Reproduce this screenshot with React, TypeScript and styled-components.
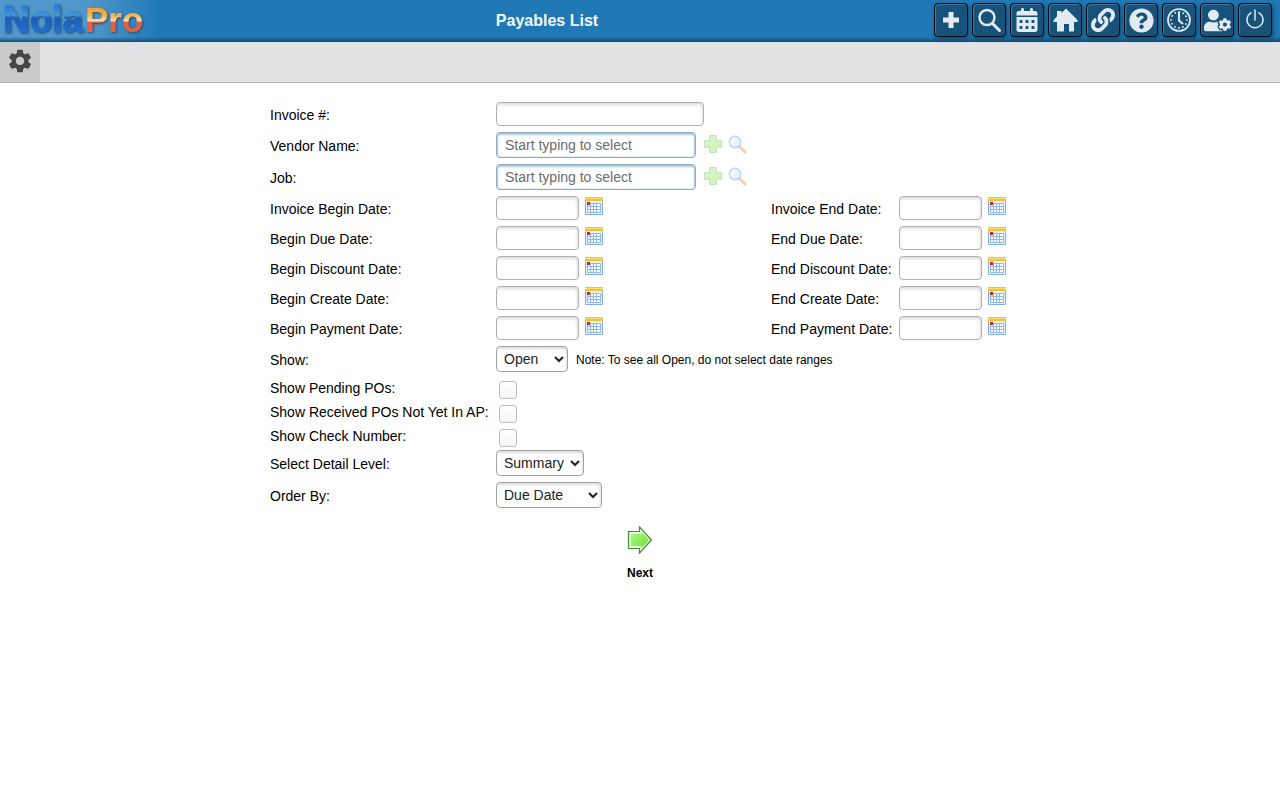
import React, { useId } from "react";
import styled, { createGlobalStyle } from "styled-components";
import { FaLink, FaUserCog, FaQuestionCircle } from "react-icons/fa";
import { FaCalendarDays } from "react-icons/fa6";
import { MdSettings } from "react-icons/md";

const Global = createGlobalStyle`
  * { box-sizing: border-box; }
  body { margin: 0; background: #fff; color: #000; font: 14px/16px "Liberation Sans", Arial, sans-serif; }
  button, input, select { font: inherit; color: inherit; }
`;

const Header = styled.header`
  display: flex;
  align-items: center;
  height: 42px;
  padding-right: 8px;
  background: linear-gradient(to bottom, transparent 37px, #104c75 42px),
    linear-gradient(to right, #5097cb 0, #4f97ca 90px, #2079b4 160px, #2079b4 100%);
`;

const Logo = styled.a`
  flex: none;
  width: 160px;
  height: 42px;
  svg { display: block; }
`;

const Title = styled.h1`
  flex: 1;
  margin: 0;
  text-align: center;
  color: #f4f8fb;
  font-size: 16px;
  line-height: 20px;
`;

const Tools = styled.nav`
  display: flex;
  gap: 4px;
  padding-bottom: 2px;
`;

const ToolButton = styled.button`
  display: grid;
  place-items: center;
  width: 34px;
  height: 34px;
  padding: 0;
  color: #e2ebf2;
  background: #17527b;
  border: 1px solid #020a14;
  border-radius: 4px;
  box-shadow: inset 1px 1px 1px #447aa0, 1px 2px 4px #10456a;
  svg { display: block; }
`;

const SubBar = styled.div`
  display: flex;
  height: 41px;
  background: #e1e2e4;
  border-bottom: 1px solid #b0b0b1;
`;

const GearButton = styled.button`
  display: grid;
  place-items: center;
  width: 40px;
  height: 40px;
  padding: 0 0 2px;
  border: 0;
  color: #444648;
  background: #c9cacc;
`;

const Form = styled.form`
  max-width: 740px;
  margin: 16px auto 0;
`;

const Row = styled.div<{ $height: number }>`
  display: grid;
  grid-template-columns: 226px 275px 128px 1fr;
  align-items: center;
  min-height: ${(p) => p.$height}px;
`;

const Label = styled.label`
  padding-top: 2px;
  white-space: nowrap;
`;

const Field = styled.div`
  display: flex;
  align-items: center;
  white-space: nowrap;
`;

const TextInput = styled.input<{ $width: number }>`
  width: ${(p) => p.$width}px;
  height: 24px;
  padding: 0 8px;
  background: #fff;
  border: 1px solid #b0b0b0;
  border-radius: 4px;
  box-shadow: inset -1px 2px 3px #ddd;
`;

const LookupInput = styled(TextInput)`
  height: 26px;
  border-color: #8eabc0;
  box-shadow: inset 0 1px 2px 1px #a5c8e0;
  margin-right: 8px;
  &::placeholder { color: #6c6c6c; opacity: 1; }
`;

const IconButton = styled.button<{ $faded?: boolean }>`
  display: block;
  padding: 0;
  border: 0;
  background: none;
  opacity: ${(p) => (p.$faded ? 0.4 : 1)};
  svg { display: block; }
`;

const LookupIcons = styled.div`
  display: flex;
  gap: 6px;
  padding-bottom: 2px;
`;

const DateIcon = styled(IconButton)`
  margin-left: 6px;
  padding-bottom: 4px;
`;

const Select = styled.select<{ $width: number }>`
  flex: none;
  width: ${(p) => p.$width}px;
  height: 26px;
  padding: 0 0 0 3px;
  background: #fff;
  border: 1px solid #a4a4a4;
  border-radius: 4px;
  box-shadow: inset -1px 2px 3px #ddd;
  color: #222;
`;

const Note = styled.span`
  margin-left: 8px;
  padding-top: 2px;
  font-size: 12px;
`;

const CheckCell = styled.div`
  align-self: end;
  padding-left: 3px;
`;

const Checkbox = styled.input`
  display: block;
  appearance: none;
  width: 18px;
  height: 18px;
  margin: 0;
  border: 1px solid #bbb;
  border-radius: 3px;
  background: linear-gradient(#fff, #f7f7f7);
  &:checked { background: #2079b4; }
`;

const NextButton = styled.button`
  display: flex;
  flex-direction: column;
  align-items: center;
  gap: 11px;
  margin: 15px auto 0;
  padding: 0;
  border: 0;
  background: none;
  font-size: 12px;
  font-weight: bold;
`;

const LogoArt = () => (
  <svg width="150" height="42" viewBox="0 0 150 42" role="img" aria-label="NolaPro">
    <defs>
      <linearGradient id="blue" gradientUnits="userSpaceOnUse" x1="0" y1="4" x2="0" y2="32">
        <stop offset="0" stopColor="#1f74cc" />
        <stop offset="0.4" stopColor="#4596dc" />
        <stop offset="0.5" stopColor="#1b5cb9" />
        <stop offset="1" stopColor="#2470cb" />
      </linearGradient>
      <linearGradient id="orange" gradientUnits="userSpaceOnUse" x1="0" y1="4" x2="0" y2="32">
        <stop offset="0" stopColor="#f5951a" />
        <stop offset="0.4" stopColor="#f9b04a" />
        <stop offset="0.6" stopColor="#fbdcae" />
        <stop offset="0.66" stopColor="#e75c3a" />
        <stop offset="1" stopColor="#e56443" />
      </linearGradient>
      <filter id="raise" x="-10%" y="-10%" width="120%" height="130%">
        <feDropShadow dx="1" dy="1" stdDeviation="0.8" floodColor="#1b3f60" floodOpacity="0.9" />
      </filter>
    </defs>
    <g filter="url(#raise)" fontFamily="Liberation Sans, Arial, sans-serif" fontWeight="700">
      <text x="3" y="32" fontSize="37" fill="url(#blue)" stroke="url(#blue)" strokeWidth="0.8">Nola</text>
      <text x="85" y="32" fontSize="35" fill="url(#orange)">Pro</text>
    </g>
  </svg>
);

const PlusGlyph = () => (
  <svg width="26" height="26" viewBox="0 0 26 26" fill="currentColor">
    <path d="M10.500 5h5v5.500H21v5h-5.500V21h-5v-5.500H5v-5h5.500z" />
  </svg>
);

const SearchGlyph = () => (
  <svg width="26" height="26" viewBox="0 0 26 26" fill="none" stroke="currentColor">
    <circle cx="11" cy="10.500" r="7.500" strokeWidth="2.400" />
    <path d="M16.500 16.500L23.500 23.500" strokeWidth="3" strokeLinecap="round" />
  </svg>
);

const HouseGlyph = () => (
  <svg width="26" height="26" viewBox="0 0 26 26" fill="currentColor">
    <path d="M14 1.500L25.500 13v2H22v9.500h-5V17h-5v7.500H5V15H1.500v-2L5 9.500V4h4.500v2z" />
  </svg>
);

const ClockGlyph = () => (
  <svg width="26" height="26" viewBox="0 0 26 26" fill="none" stroke="currentColor">
    <circle cx="13" cy="13" r="11" strokeWidth="1.700" />
    <circle cx="13" cy="13" r="8" strokeWidth="1.800" strokeDasharray="1.600 2.589" strokeDashoffset="0.800" />
    <path d="M13 5v8.500l4 3.500" strokeWidth="2" />
  </svg>
);

const PowerGlyph = () => (
  <svg width="24" height="24" viewBox="0 0 24 24" fill="none" stroke="currentColor" strokeWidth="1.500" strokeLinecap="round">
    <path d="M12 2v10M8 4.800a8 8 0 1 0 8 0" />
  </svg>
);

const PlusArt = () => (
  <svg width="18" height="18" viewBox="0 0 18 18">
    <path d="M5.500 .5h7v5h5v7h-5v5h-7v-5h-5v-7h5z" fill="#8fe05a" stroke="#6fbf55" />
    <path d="M7 2h4v5h5v2H2V7h5z" fill="#9ee86c" />
  </svg>
);

const LensArt = () => (
  <svg width="19" height="19" viewBox="0 0 19 19" fill="none">
    <path d="M11.500 11.500l5.500 5.500" stroke="#e89036" strokeWidth="3" strokeLinecap="round" />
    <circle cx="7" cy="7" r="5.800" fill="#cfeafa" stroke="#5d9fd8" strokeWidth="1.500" />
    <path d="M4 6.500a3 3 0 0 1 3-2.500" stroke="#fff" strokeWidth="1.500" />
  </svg>
);

const CalendarArt = () => (
  <svg width="18" height="18" viewBox="0 0 18 18">
    <path d="M.5.500h17v17H.5z" fill="#e6f1fc" stroke="#86ade0" />
    <path d="M0 0h18v4H0z" fill="#ecc438" />
    <path d="M0 1h18v1H0z" fill="#f9df78" />
    <path d="M3 6h12v9H3z" fill="#fff" />
    <path d="M2.500 6.500h13v9h-13zM2.500 9.500h13M2.500 12.500h13M5.500 6v9M8.500 6v9M11.500 6v9" fill="none" stroke="#90b9ea" />
    <path d="M2 5h3v3H2z" fill="#c62b2b" />
  </svg>
);

const NextArt = () => (
  <svg width="26" height="28" viewBox="0 0 26 28">
    <defs>
      <linearGradient id="go" x1="0" y1="0" x2="1" y2="1">
        <stop offset="0" stopColor="#b4f580" />
        <stop offset="1" stopColor="#6ae03c" />
      </linearGradient>
    </defs>
    <path d="M1.500 5.500h11V.8L24.500 14 12.500 27.200v-4.700h-11z" fill="#e8fbd9" stroke="#3f8f34" strokeWidth="1.200" />
    <path d="M4 8h10.500V5.500L22 14l-7.500 8.500V20H4z" fill="url(#go)" />
  </svg>
);

const tools = [
  { name: "Add", icon: <PlusGlyph /> },
  { name: "Search", icon: <SearchGlyph /> },
  { name: "Calendar", icon: <FaCalendarDays size={24} /> },
  { name: "Home", icon: <HouseGlyph /> },
  { name: "Links", icon: <FaLink size={24} /> },
  { name: "Help", icon: <FaQuestionCircle size={25} /> },
  { name: "Time clock", icon: <ClockGlyph /> },
  { name: "User settings", icon: <FaUserCog size={27} /> },
  { name: "Log out", icon: <PowerGlyph /> },
];

const dates = [
  ["Invoice Begin Date:", "Invoice End Date:"],
  ["Begin Due Date:", "End Due Date:"],
  ["Begin Discount Date:", "End Discount Date:"],
  ["Begin Create Date:", "End Create Date:"],
  ["Begin Payment Date:", "End Payment Date:"],
];

function LookupRow({ label }: { label: string }) {
  const id = useId();
  return (
    <Row $height={32}>
      <Label htmlFor={id}>{label}</Label>
      <Field>
        <LookupInput id={id} $width={200} placeholder="Start typing to select" />
        <LookupIcons>
          <IconButton type="button" $faded aria-label="Add"><PlusArt /></IconButton>
          <IconButton type="button" $faded aria-label="Search"><LensArt /></IconButton>
        </LookupIcons>
      </Field>
    </Row>
  );
}

function DateField({ label }: { label: string }) {
  const id = useId();
  return (
    <>
      <Label htmlFor={id}>{label}</Label>
      <Field>
        <TextInput id={id} $width={83} />
        <DateIcon type="button" aria-label="Pick a date"><CalendarArt /></DateIcon>
      </Field>
    </>
  );
}

function CheckRow({ label }: { label: string }) {
  const id = useId();
  return (
    <Row $height={24}>
      <Label htmlFor={id}>{label}</Label>
      <CheckCell><Checkbox id={id} type="checkbox" /></CheckCell>
    </Row>
  );
}

function SelectRow({ label, width, options, note }: { label: string; width: number; options: string[]; note?: string }) {
  const id = useId();
  return (
    <Row $height={32}>
      <Label htmlFor={id}>{label}</Label>
      <Field>
        <Select id={id} $width={width}>
          {options.map((o) => <option key={o}>{o}</option>)}
        </Select>
        {note && <Note>{note}</Note>}
      </Field>
    </Row>
  );
}

export default function App() {
  return (
    <>
      <Global />
      <Header>
        <Logo href="#"><LogoArt /></Logo>
        <Title>Payables List</Title>
        <Tools>
          {tools.map((t) => (
            <ToolButton key={t.name} type="button" aria-label={t.name}>{t.icon}</ToolButton>
          ))}
        </Tools>
      </Header>
      <SubBar>
        <GearButton type="button" aria-label="Settings"><MdSettings size={28} /></GearButton>
      </SubBar>
      <Form>
        <Row $height={30}>
          <Label htmlFor="invoice">Invoice #:</Label>
          <Field><TextInput id="invoice" $width={208} /></Field>
        </Row>
        <LookupRow label="Vendor Name:" />
        <LookupRow label="Job:" />
        {dates.map(([begin, end]) => (
          <Row key={begin} $height={30}>
            <DateField label={begin} />
            <DateField label={end} />
          </Row>
        ))}
        <SelectRow label="Show:" width={72} options={["Open"]} note="Note: To see all Open, do not select date ranges" />
        <CheckRow label="Show Pending POs:" />
        <CheckRow label="Show Received POs Not Yet In AP:" />
        <CheckRow label="Show Check Number:" />
        <SelectRow label="Select Detail Level:" width={88} options={["Summary"]} />
        <SelectRow label="Order By:" width={106} options={["Due Date"]} />
        <NextButton type="button"><NextArt />Next</NextButton>
      </Form>
    </>
  );
}
